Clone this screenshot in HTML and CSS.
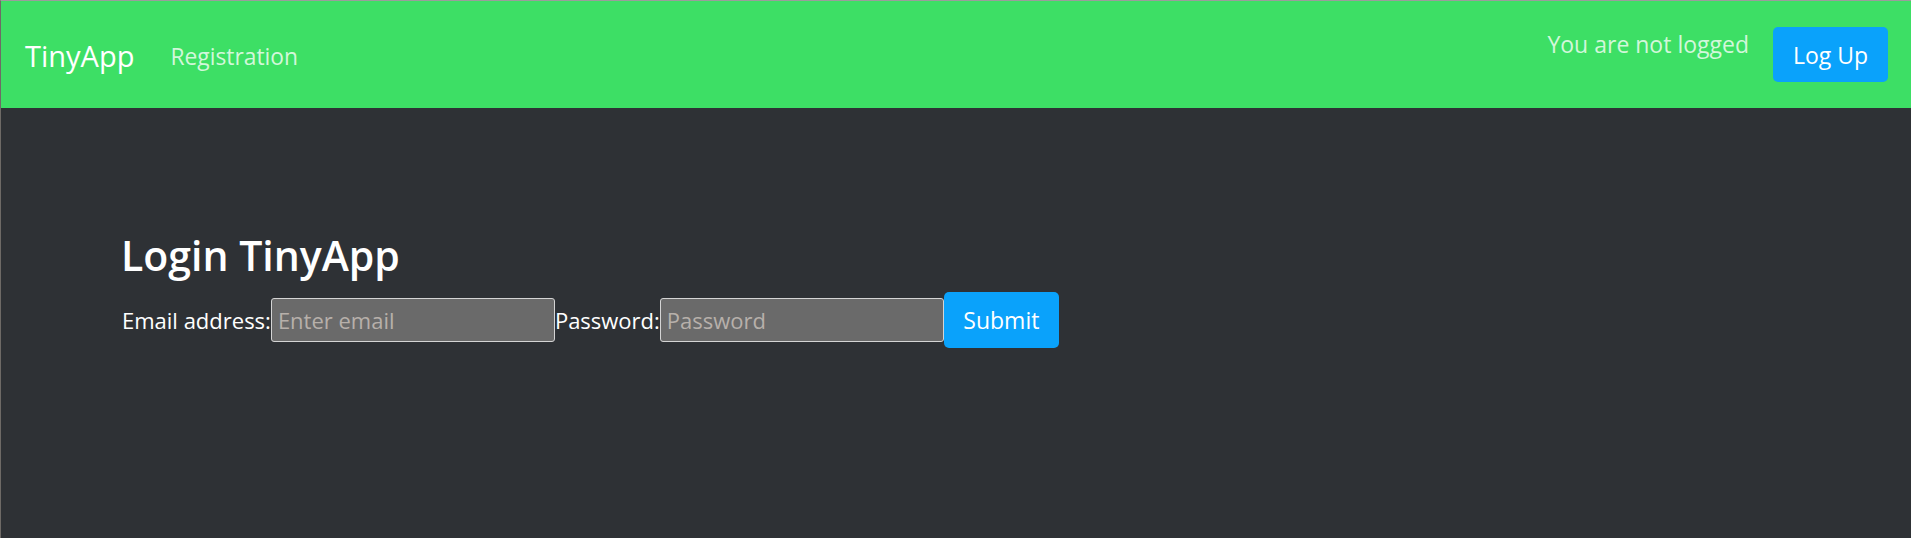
FILE: index.html
```html
<!DOCTYPE html>
<html lang="en">
<head>
<meta charset="utf-8">
<title>TinyApp</title>
<link rel="stylesheet" href="styles.css">
</head>
<body>
<nav class="navbar">
  <a class="brand" href="#">TinyApp</a>
  <a class="nav-link" href="#">Registration</a>
  <div class="nav-right">
    <p class="status">You are not logged</p>
    <button class="btn" type="button">Log Up</button>
  </div>
</nav>
<main class="content">
  <h2 class="title">Login TinyApp</h2>
  <form class="login-form">
    <label class="field-label" for="email">Email address:</label>
    <input class="field" id="email" type="email" placeholder="Enter email">
    <label class="field-label" for="password">Password:</label>
    <input class="field" id="password" type="password" placeholder="Password">
    <button class="btn" type="submit">Submit</button>
  </form>
</main>
</body>
</html>
```

FILE: styles.css
```css
* { box-sizing: border-box; }
html, body { height: 100%; }
body {
  margin: 0;
  background: #2e3135;
  border-top: 1px solid #9c9c9c;
  border-left: 1px solid #6e6a66;
  font-family: "Open Sans", "Noto Sans", sans-serif;
  color: #ffffff;
}
.navbar {
  display: flex;
  align-items: center;
  height: 107px;
  background: #3ddf65;
  padding: 0 23px 0 24px;
}
.brand {
  color: #ffffff;
  text-decoration: none;
  font-size: 29px;
  line-height: 1.5;
  margin-right: 36px;
  margin-top: 2px;
}
.nav-link {
  color: #d2f7da;
  text-decoration: none;
  font-size: 22.8px;
  line-height: 1.5;
  margin-top: 5px;
}
.nav-right {
  margin-left: auto;
  display: flex;
  align-items: center;
  gap: 24px;
}
.status {
  margin: 0 0 20px 0;
  color: #d2f7da;
  font-size: 23px;
  line-height: 1.3;
}
.btn {
  width: 115px;
  height: 55px;
  border: none;
  border-radius: 5px;
  background: #0aa2fb;
  color: #ffffff;
  font-family: inherit;
  font-size: 23px;
  padding: 0;
  cursor: pointer;
}
.content {
  padding: 123px 0 0 121px;
}
.title {
  margin: 0 0 12px -1px;
  font-size: 41px;
  font-weight: 600;
  line-height: 1.2;
}
.login-form {
  display: flex;
  align-items: center;
}
.field-label {
  font-size: 22px;
  line-height: 1.5;
}
.field {
  width: 284px;
  height: 44px;
  border: 1px solid #d4d4d4;
  border-radius: 3px;
  background: #6a6a6a;
  color: #ffffff;
  font-family: inherit;
  font-size: 22px;
  padding: 0 6px;
  outline: none;
}
.field::placeholder { color: #b7b0aa; opacity: 1; }
.login-form .btn { height: 56px; }
```
